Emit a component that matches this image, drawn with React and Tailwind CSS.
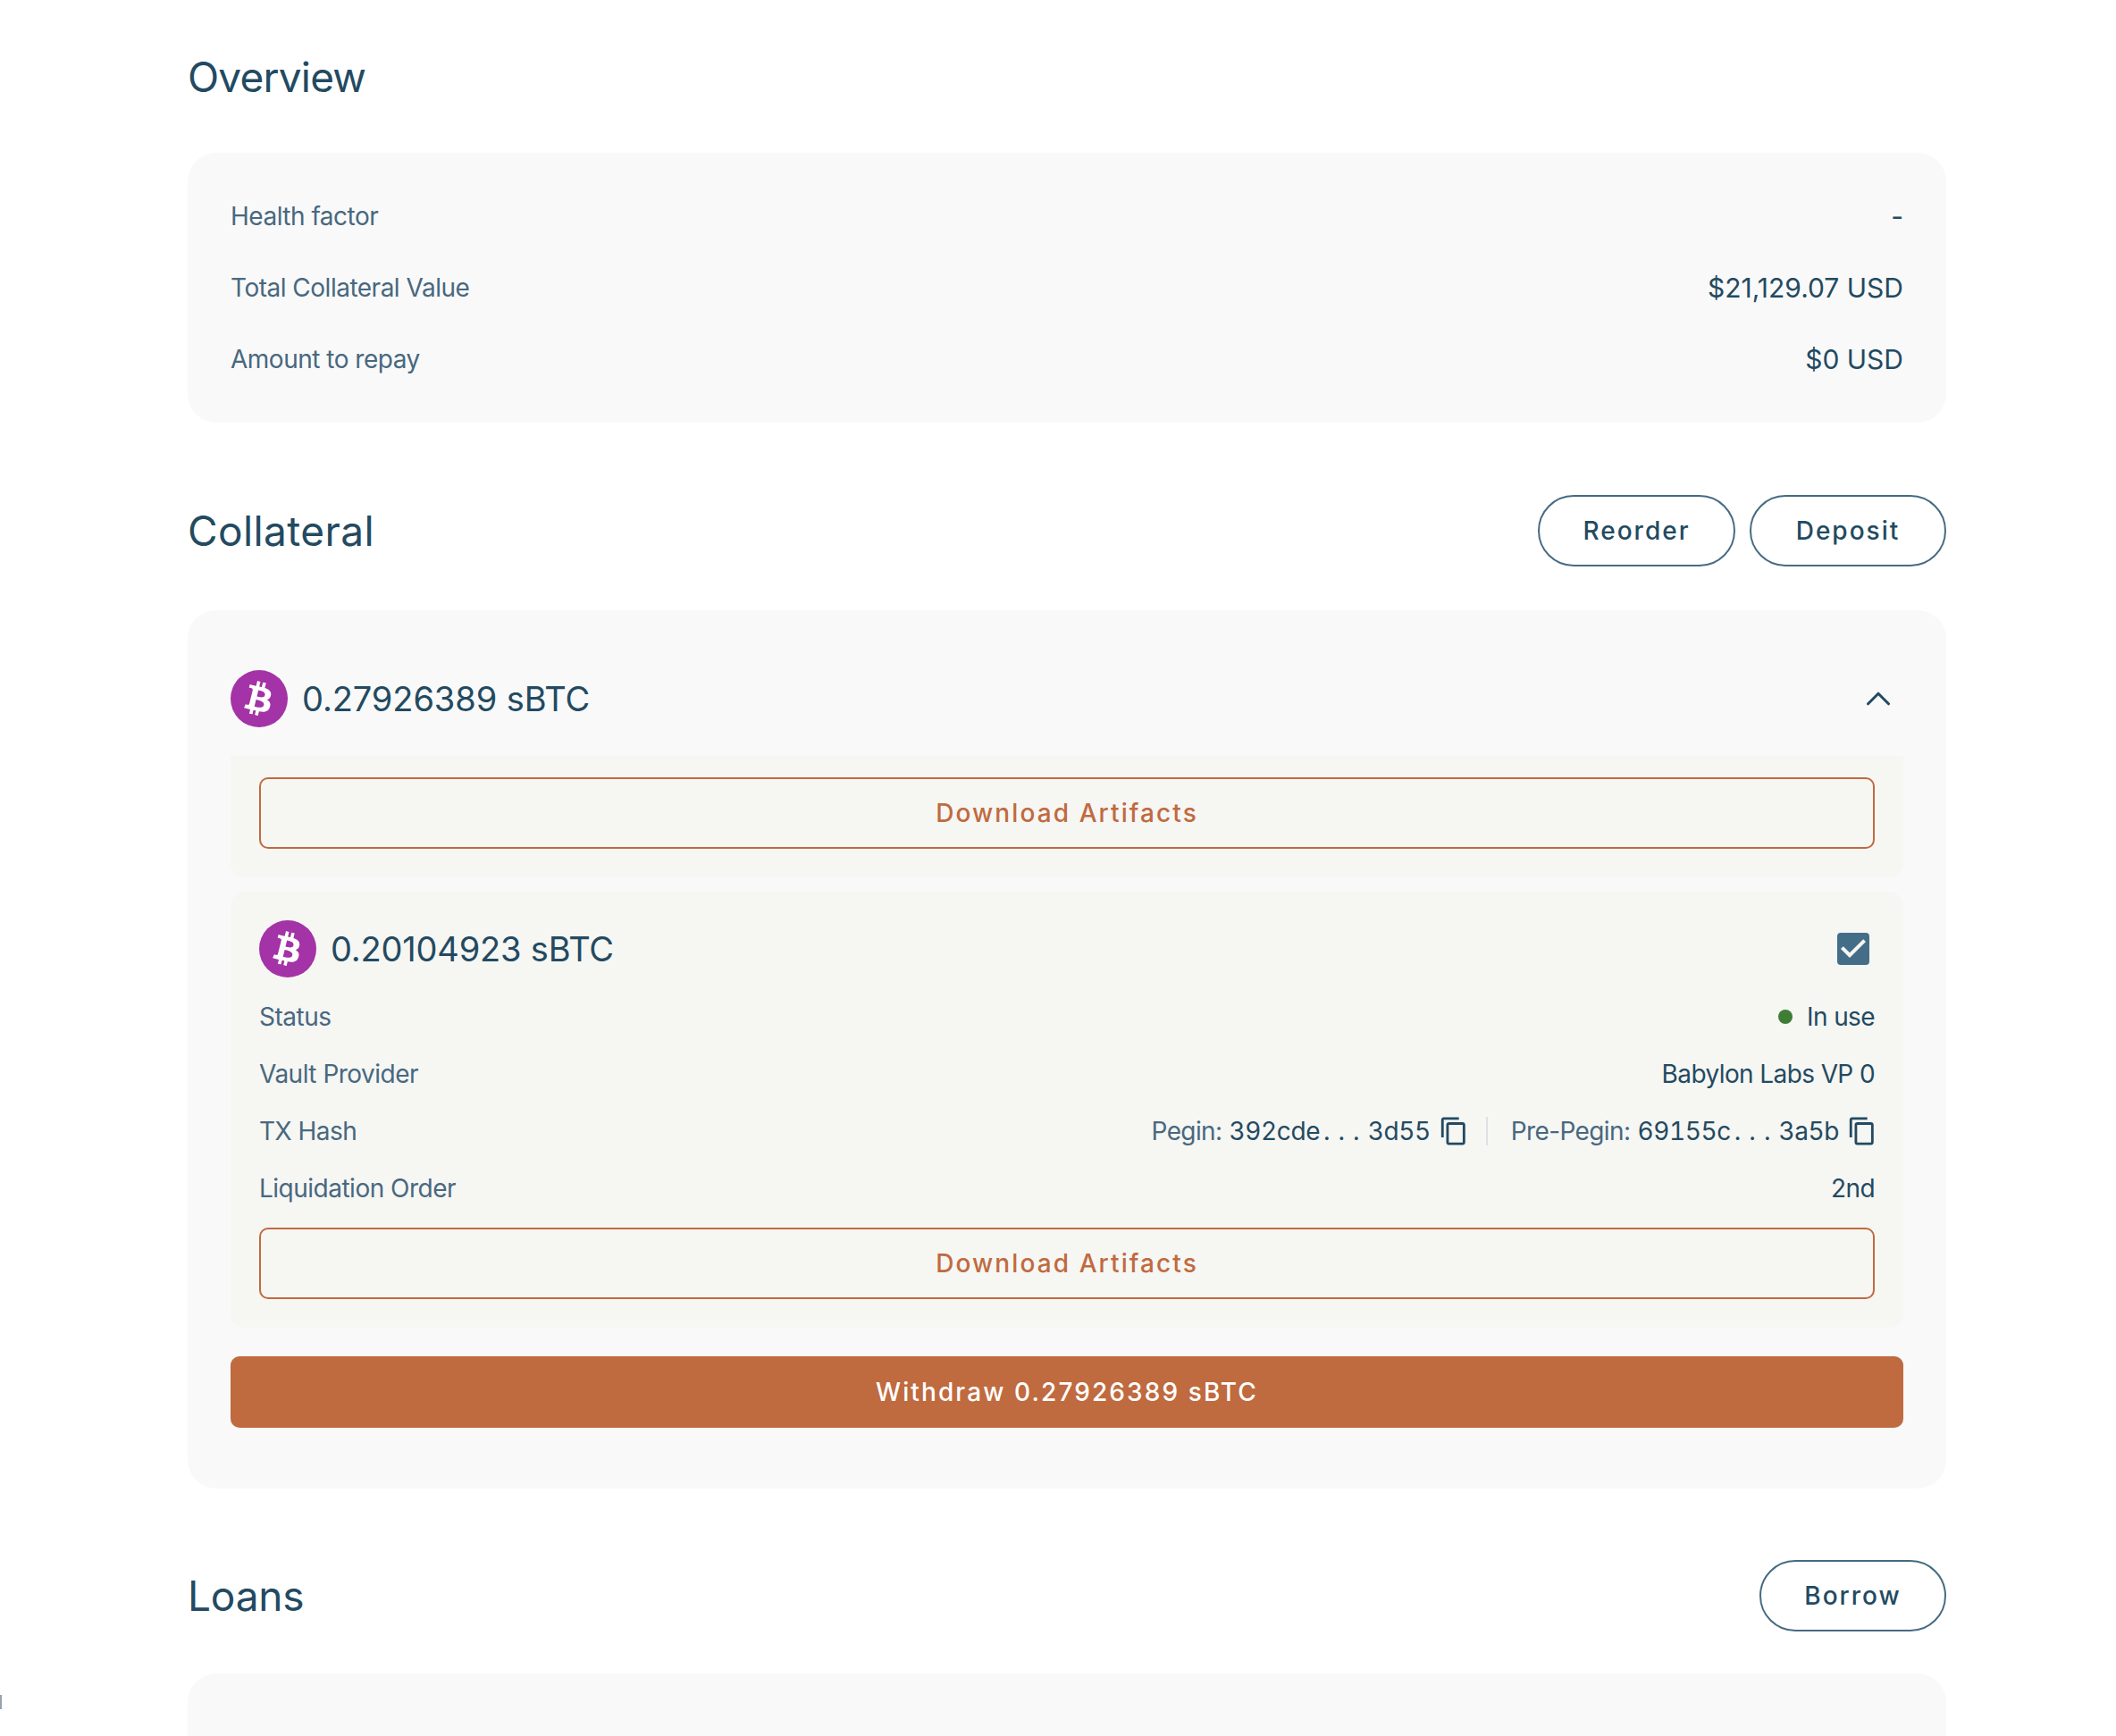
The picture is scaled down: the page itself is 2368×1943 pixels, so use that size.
import { ChevronUp } from "lucide-react";
import { FaBtc } from "react-icons/fa";
import { MdCheckBox, MdOutlineContentCopy } from "react-icons/md";

const BtcIcon = () => (
  <div className="flex h-16 w-16 shrink-0 items-center justify-center rounded-full bg-[#a333a6]">
    <FaBtc className="rotate-[14deg] text-white" size={38} />
  </div>
);

const PillButton = ({ children, width }) => (
  <button
    className={`h-20 rounded-full border-2 border-[#466b83] text-[28px] font-medium leading-none tracking-[2px] text-[#234a61] ${width}`}
  >
    {children}
  </button>
);

const OutlineButton = () => (
  <button className="h-20 w-full rounded-[10px] border-2 border-[#c06a3f] text-[28px] font-medium leading-none tracking-[2.1px] text-[#c06a3f]">
    Download Artifacts
  </button>
);

const OverviewRow = ({ label, value }) => (
  <div className="flex h-10 items-center justify-between">
    <span className="text-[28px] tracking-[-0.5px] text-[#48687f]">{label}</span>
    <span className="text-[30px] text-[#234a61]">{value}</span>
  </div>
);

const DetailRow = ({ label, children }) => (
  <div className="flex h-10 items-center justify-between">
    <span className="text-[28px] tracking-[-0.5px] text-[#48687f]">{label}</span>
    <div className="flex items-center text-[28px] tracking-[-0.6px] text-[#234a61]">{children}</div>
  </div>
);

const TxHash = ({ label, start, end }) => (
  <div className="flex items-center">
    <span className="text-[#48687f]">{label}</span>
    <span className="ml-2 flex tabular-nums tracking-[-0.4px]">
      <span>{start}</span>
      <span className="ml-1 tracking-[9px]">...</span>
      <span>{end}</span>
    </span>
    <MdOutlineContentCopy className="ml-[9px] -mr-[3px]" size={34} />
  </div>
);

export default function App() {
  return (
    <div className="relative h-[1943px] overflow-hidden bg-white font-['Inter',sans-serif]">
      {/* stray pixel on the page edge */}
      <div className="absolute left-0 top-[1897px] h-4 w-[2px] bg-gray-400" />

      <main className="ml-[210px] w-[1968px] pt-[58px]">
        {/* Overview */}
        <h2 className="flex h-14 items-center text-[46px] tracking-[-0.8px] text-[#234a61]">Overview</h2>
        <section className="mt-[57px] flex flex-col gap-10 rounded-[32px] bg-[#f9f9f9] px-12 py-[51px]">
          <OverviewRow label="Health factor" value="-" />
          <OverviewRow label="Total Collateral Value" value="$21,129.07 USD" />
          <OverviewRow label="Amount to repay" value="$0 USD" />
        </section>

        {/* Collateral */}
        <div className="mt-[81px] flex items-center justify-between">
          <h2 className="text-[46px] tracking-[0.4px] text-[#234a61]">Collateral</h2>
          <div className="flex gap-4">
            <PillButton width="w-[221px]">Reorder</PillButton>
            <PillButton width="w-[220px]">Deposit</PillButton>
          </div>
        </div>
        <section className="mt-[49px] rounded-[32px] bg-[#f9f9f9] px-12 pb-[68px] pt-[67px]">
          <div className="flex items-center justify-between">
            <div className="flex items-center gap-4">
              <BtcIcon />
              <span className="text-[38px] tracking-[-0.1px] text-[#234a61]">0.27926389 sBTC</span>
            </div>
            <ChevronUp className="mr-[5px] text-[#234a61]" size={46} strokeWidth={1.6} />
          </div>

          <div className="mt-8 rounded-b-2xl bg-[#f6f6f3] px-8 pb-8 pt-6">
            <OutlineButton />
          </div>

          <div className="mt-4 flex flex-col gap-6 rounded-2xl bg-[#f6f6f3] p-8">
            <div className="flex items-center justify-between">
              <div className="flex items-center gap-4">
                <BtcIcon />
                <span className="text-[38px] tracking-[-0.2px] text-[#234a61]">0.20104923 sBTC</span>
              </div>
              <MdCheckBox className="text-[#446e88]" size={48} />
            </div>
            <DetailRow label="Status">
              <span className="mr-4 h-[16px] w-[16px] rounded-full bg-[#3f7d34]" />
              In use
            </DetailRow>
            <DetailRow label="Vault Provider">Babylon Labs VP 0</DetailRow>
            <DetailRow label="TX Hash">
              <TxHash label="Pegin:" start="392cde" end="3d55" />
              <div className="ml-[22px] mr-[26px] h-8 w-[2px] bg-[#dde1e3]" />
              <TxHash label="Pre-Pegin:" start="69155c" end="3a5b" />
            </DetailRow>
            <DetailRow label="Liquidation Order">2nd</DetailRow>
            <OutlineButton />
          </div>

          <button className="mt-8 h-20 w-full rounded-[10px] bg-[#c06a3f] text-[28px] font-medium leading-none tracking-[2.1px] text-white">
            Withdraw 0.27926389 sBTC
          </button>
        </section>

        {/* Loans */}
        <div className="mt-[80px] flex items-center justify-between">
          <h2 className="text-[46px] tracking-[-0.2px] text-[#234a61]">Loans</h2>
          <PillButton width="w-[209px]">Borrow</PillButton>
        </div>
        <section className="mt-[47px] h-[200px] rounded-[32px] bg-[#f9f9f9]" />
      </main>
    </div>
  );
}
